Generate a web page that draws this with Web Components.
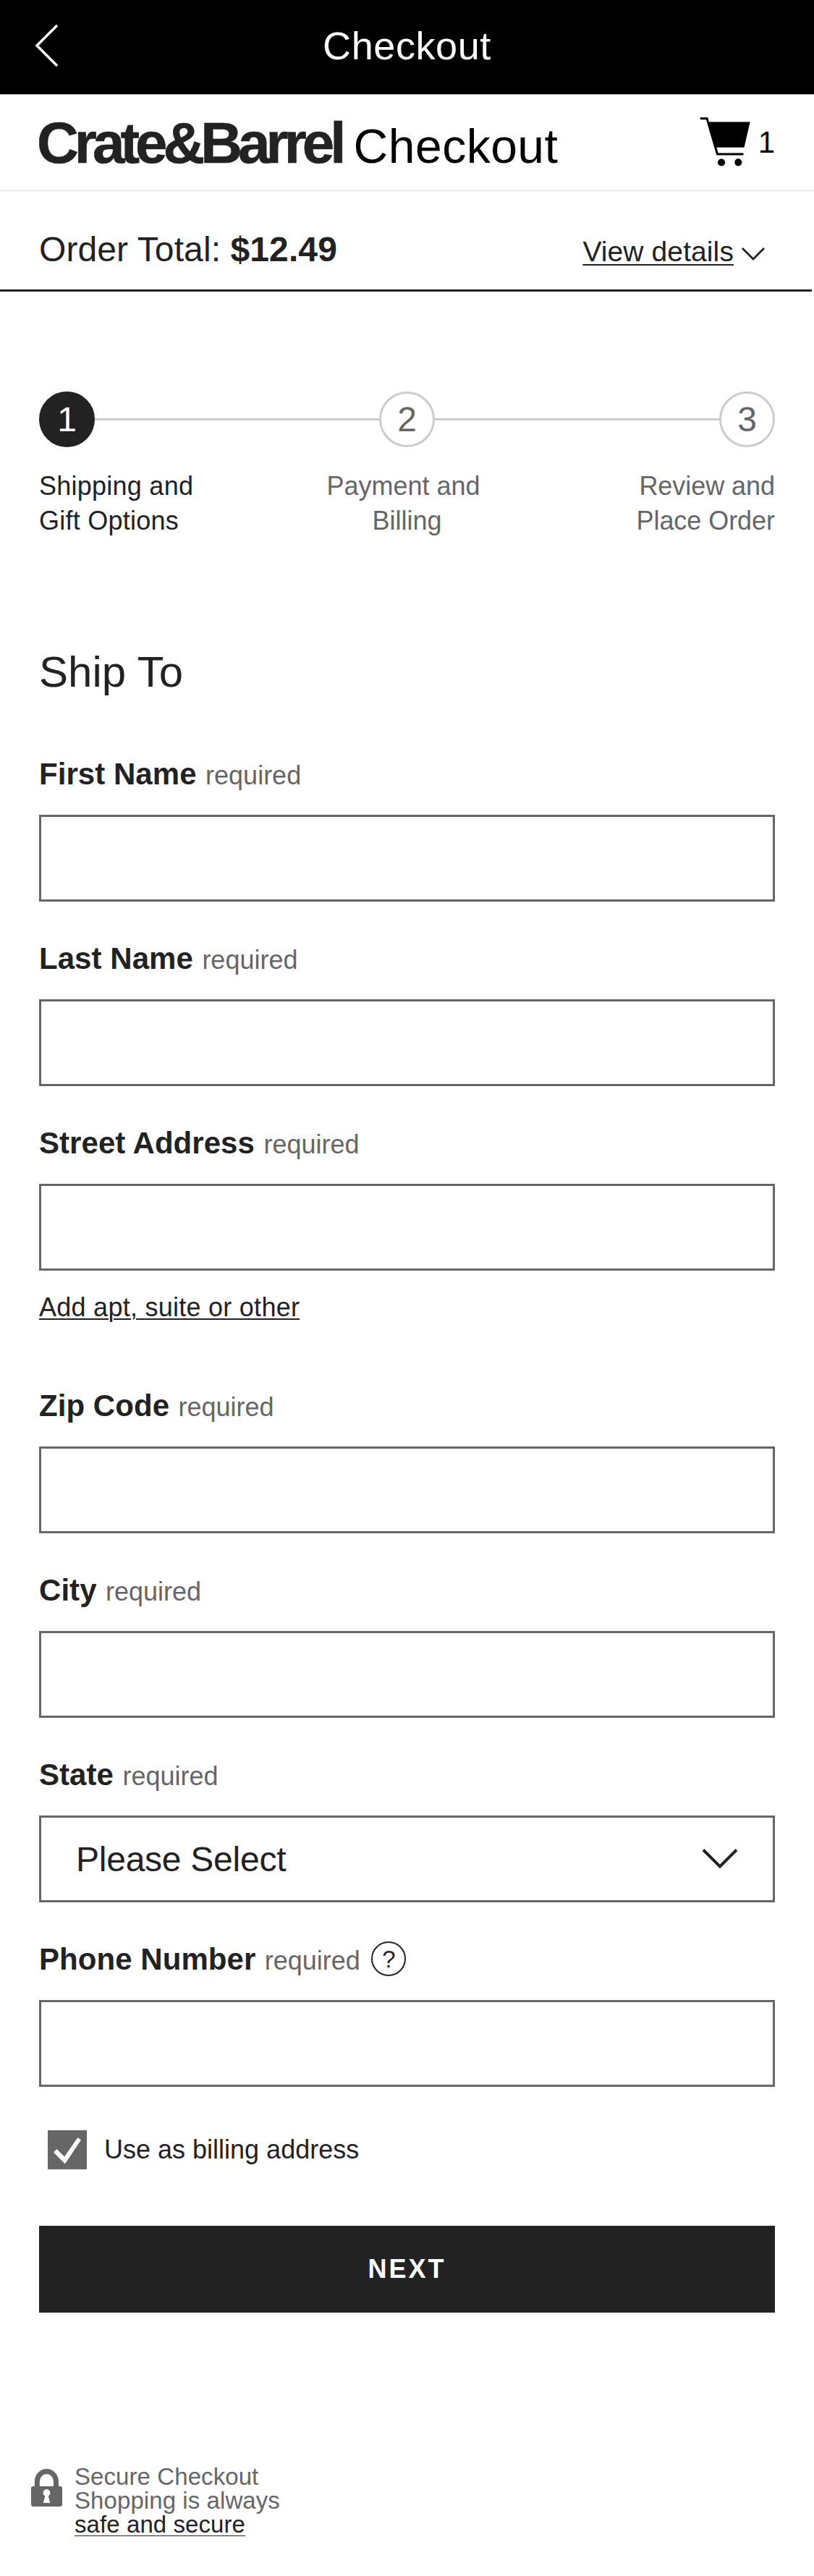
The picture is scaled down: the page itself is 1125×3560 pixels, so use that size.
<!DOCTYPE html>
<html lang="en">
<head>
<meta charset="utf-8">
<title>Checkout</title>
<style>
    body {
        margin: 0;
        background: #fff;
        color: #222;
        font-family: "Liberation Sans", Arial, sans-serif;
        font-size: 36px;
    }

    main {
        display: flex;
        flex-direction: column;
        padding: 0 54px;
    }

    h1 {
        margin: 155px 0 86px;
        font-size: 60px;
        font-weight: normal;
        line-height: 60px;
    }

    .fields {
        display: flex;
        flex-direction: column;
        gap: 54px;
    }
</style>
</head>
<body>
    <nav-bar>Checkout</nav-bar>
    <brand-header count="1">Checkout</brand-header>
    <order-summary total="$12.49"></order-summary>
    <main>
        <checkout-steps></checkout-steps>
        <h1>Ship To</h1>
        <div class="fields">
            <form-field label="First Name"></form-field>
            <form-field label="Last Name"></form-field>
            <form-field label="Street Address"><text-link slot="after">Add apt, suite or other</text-link></form-field>
            <form-field label="Zip Code"></form-field>
            <form-field label="City"></form-field>
            <form-field label="State" type="select" placeholder="Please Select"></form-field>
            <form-field label="Phone Number"><help-icon slot="help"></help-icon></form-field>
        </div>
        <check-box>Use as billing address</check-box>
        <primary-button>NEXT</primary-button>
    </main>
    <secure-note></secure-note>

<script>
class BaseElement extends HTMLElement {
    constructor() {
        super();
        this.attachShadow({ mode: 'open' });
    }

    connectedCallback() {
        this.shadowRoot.innerHTML = this.render();
    }
}

class NavBar extends BaseElement {
    render() {
        return `
            <style>
                :host {
                    display: grid;
                    grid-template-columns: 100px 1fr 100px;
                    height: 130px;
                    background: #000;
                    color: #fff;
                    border-bottom: 1px solid #aaa;
                }

                svg {
                    margin: 33px 0 0 46px;
                }

                .title {
                    text-align: center;
                    font-size: 54px;
                    line-height: 126px;
                    letter-spacing: 0.6px;
                }
            </style>
            <svg width="36" height="60" viewBox="0 0 36 60" fill="none" stroke="#fff" stroke-width="3.6">
                <path d="M33 2 5 30 33 58"/>
            </svg>
            <div class="title"><slot></slot></div>
        `;
    }
}

class BrandHeader extends BaseElement {
    render() {
        return `
            <style>
                :host {
                    display: flex;
                    align-items: baseline;
                    box-sizing: border-box;
                    height: 134px;
                    padding: 27px 54px 0 51px;
                    border-bottom: 3px solid #eee;
                    color: #000;
                }

                .logo {
                    color: #222;
                    font-size: 80px;
                    font-weight: bold;
                    line-height: 80px;
                    letter-spacing: -6px;
                    -webkit-text-stroke: 0.6px #222;
                }

                .title {
                    margin-left: 16px;
                    font-size: 66px;
                    line-height: 66px;
                    letter-spacing: 0.5px;
                }

                .cart {
                    display: flex;
                    align-self: flex-start;
                    margin-left: auto;
                }

                .cart svg {
                    margin: 4px 11px 0 0;
                }

                .count {
                    margin-top: 18px;
                    font-size: 42px;
                    line-height: 42px;
                }
            </style>
            <div class="logo">Crate&amp;Barrel</div>
            <div class="title"><slot></slot></div>
            <div class="cart">
                <svg width="70" height="68" viewBox="0 0 70 68">
                    <path d="M.7 1.7H10L24.5 51H60.5" fill="none" stroke="#000" stroke-width="3"/>
                    <path d="M11 6.5H69.7L61.5 41.7H22Z"/>
                    <circle cx="30" cy="62.5" r="5.1"/>
                    <circle cx="53.3" cy="62.3" r="5.1"/>
                </svg>
                <div class="count">${this.getAttribute('count')}</div>
            </div>
        `;
    }
}

class OrderSummary extends BaseElement {
    render() {
        return `
            <style>
                :host {
                    display: flex;
                    align-items: baseline;
                    box-sizing: border-box;
                    width: 1122px;
                    height: 138px;
                    padding: 56px 64px 0 54px;
                    border-bottom: 3px solid #222;
                }

                .total {
                    font-size: 48px;
                    line-height: 48px;
                    letter-spacing: 0.1px;
                }

                .details {
                    margin-left: auto;
                    font-size: 39px;
                    line-height: 39px;
                    letter-spacing: 0.1px;
                    text-decoration: underline 2px;
                    text-underline-offset: 4px;
                }

                svg {
                    margin: 0 0 2px 10px;
                }
            </style>
            <div class="total">Order Total: <b>${this.getAttribute('total')}</b></div>
            <div class="details">View details</div>
            <svg width="34" height="20" viewBox="0 0 34 20" fill="none" stroke="#222" stroke-width="2.8">
                <path d="M2 2 17 17 32 2"/>
            </svg>
        `;
    }
}

class CheckoutSteps extends BaseElement {
    render() {
        return `
            <style>
                :host {
                    display: block;
                    padding-top: 138px;
                    color: #666;
                }

                .track {
                    display: flex;
                    align-items: center;
                }

                .dot {
                    box-sizing: border-box;
                    width: 77px;
                    height: 77px;
                    border: 3px solid #ccc;
                    border-radius: 50%;
                    font-size: 48px;
                    line-height: 71px;
                    text-align: center;
                }

                .dot.active {
                    background: #222;
                    border-color: #222;
                    color: #fff;
                }

                .line {
                    flex: 1;
                    height: 3px;
                    background: #ccc;
                }

                .labels {
                    display: grid;
                    grid-template-columns: repeat(3, 1fr);
                    margin-top: 30px;
                    line-height: 48px;
                    text-align: center;
                }

                .labels :first-child {
                    color: #222;
                    text-align: left;
                    letter-spacing: 0.25px;
                }

                .labels :last-child {
                    text-align: right;
                    letter-spacing: -0.05px;
                }
            </style>
            <div class="track">
                <div class="dot active">1</div>
                <div class="line"></div>
                <div class="dot">2</div>
                <div class="line"></div>
                <div class="dot">3</div>
            </div>
            <div class="labels">
                <div>Shipping and<br>Gift Options</div>
                <div>Payment and&nbsp;<br>Billing</div>
                <div>Review and<br>Place Order</div>
            </div>
        `;
    }
}

class FormField extends BaseElement {
    render() {
        const control = this.getAttribute('type') === 'select'
            ? `<div class="control select" role="combobox">
                    <span>${this.getAttribute('placeholder')}</span>
                    <svg width="50" height="30" viewBox="0 0 50 30" fill="none" stroke="#222" stroke-width="4">
                        <path d="M2 2.5 25 25.5 48 2.5"/>
                    </svg>
                </div>`
            : '<input class="control" id="control">';

        return `
            <style>
                :host {
                    display: block;
                }

                .label {
                    display: flex;
                    align-items: baseline;
                    height: 47px;
                    padding-top: 1px;
                    margin-bottom: 33px;
                    line-height: 48px;
                }

                label {
                    font-size: 42px;
                    font-weight: bold;
                    letter-spacing: 0.05px;
                }

                .required {
                    margin-left: 12.5px;
                    color: #666;
                }

                .control {
                    display: block;
                    box-sizing: border-box;
                    width: 100%;
                    height: 120px;
                    padding: 0 48px;
                    border: 3px solid #666;
                    border-radius: 0;
                    background: #fff;
                    font: 48px/114px "Liberation Sans", Arial, sans-serif;
                }

                .select {
                    display: flex;
                    align-items: center;
                    justify-content: space-between;
                    letter-spacing: -0.25px;
                }

                .select span {
                    padding-top: 2px;
                    line-height: 112px;
                }
            </style>
            <div class="label">
                <label for="control">${this.getAttribute('label')}</label>
                <span class="required">required</span>
                <slot name="help"></slot>
            </div>
            ${control}
            <slot name="after"></slot>
        `;
    }
}

class TextLink extends BaseElement {
    render() {
        return `
            <style>
                :host {
                    display: block;
                    padding: 27px 0 33px;
                    line-height: 48px;
                    letter-spacing: 0.26px;
                }

                span {
                    text-decoration: underline 2px;
                    text-underline-offset: 3px;
                }
            </style>
            <span><slot></slot></span>
        `;
    }
}

class HelpIcon extends BaseElement {
    render() {
        return `
            <style>
                :host {
                    align-self: flex-start;
                    box-sizing: border-box;
                    width: 48px;
                    height: 48px;
                    margin: -1px 0 0 15.5px;
                    border: 2px solid #222;
                    border-radius: 50%;
                    font-size: 33px;
                    line-height: 45px;
                    text-align: center;
                }
            </style>
            ?
        `;
    }
}

class CheckBox extends BaseElement {
    render() {
        return `
            <style>
                :host {
                    display: flex;
                    align-items: center;
                    gap: 24px;
                    height: 54px;
                    margin: 60px 0 78px 12px;
                }

                svg {
                    background: #666;
                }
            </style>
            <svg width="54" height="54" viewBox="0 0 54 54" fill="#fff">
                <path d="M8 30.5 12.5 26 23 36.5 41.5 10 46 13.5 23.8 46.5Z"/>
            </svg>
            <span><slot></slot></span>
        `;
    }
}

class PrimaryButton extends BaseElement {
    render() {
        return `
            <style>
                :host {
                    display: block;
                }

                button {
                    display: block;
                    width: 100%;
                    height: 120px;
                    padding: 0;
                    border: 0;
                    background: #222;
                    color: #fff;
                    font: bold 36px/120px "Liberation Sans", Arial, sans-serif;
                    letter-spacing: 3px;
                }
            </style>
            <button><slot></slot></button>
        `;
    }
}

class SecureNote extends BaseElement {
    render() {
        return `
            <style>
                :host {
                    display: flex;
                    gap: 17px;
                    padding: 210px 0 0 43px;
                    color: #666;
                    font-size: 33px;
                    line-height: 33px;
                    letter-spacing: 0.08px;
                }

                svg {
                    margin-top: 6px;
                }

                a {
                    color: #222;
                    text-decoration: underline 2px;
                    text-underline-offset: 4px;
                }
            </style>
            <svg width="43" height="52" viewBox="0 0 43 52">
                <path d="M8.3 26V17.5a13.1 14 0 0 1 26.2 0V26" fill="none" stroke="#666" stroke-width="7"/>
                <rect y="24" width="43" height="28" rx="3" fill="#666"/>
                <path d="M16.8 47 19.2 37.5A5 5 0 1 1 23.8 37.5L26.2 47Z" fill="#fff"/>
            </svg>
            <div>
                Secure Checkout<br>
                Shopping is always<br>
                <a>safe and secure</a>
            </div>
        `;
    }
}

customElements.define('nav-bar', NavBar);
customElements.define('brand-header', BrandHeader);
customElements.define('order-summary', OrderSummary);
customElements.define('checkout-steps', CheckoutSteps);
customElements.define('form-field', FormField);
customElements.define('text-link', TextLink);
customElements.define('help-icon', HelpIcon);
customElements.define('check-box', CheckBox);
customElements.define('primary-button', PrimaryButton);
customElements.define('secure-note', SecureNote);
</script>
</body>
</html>
